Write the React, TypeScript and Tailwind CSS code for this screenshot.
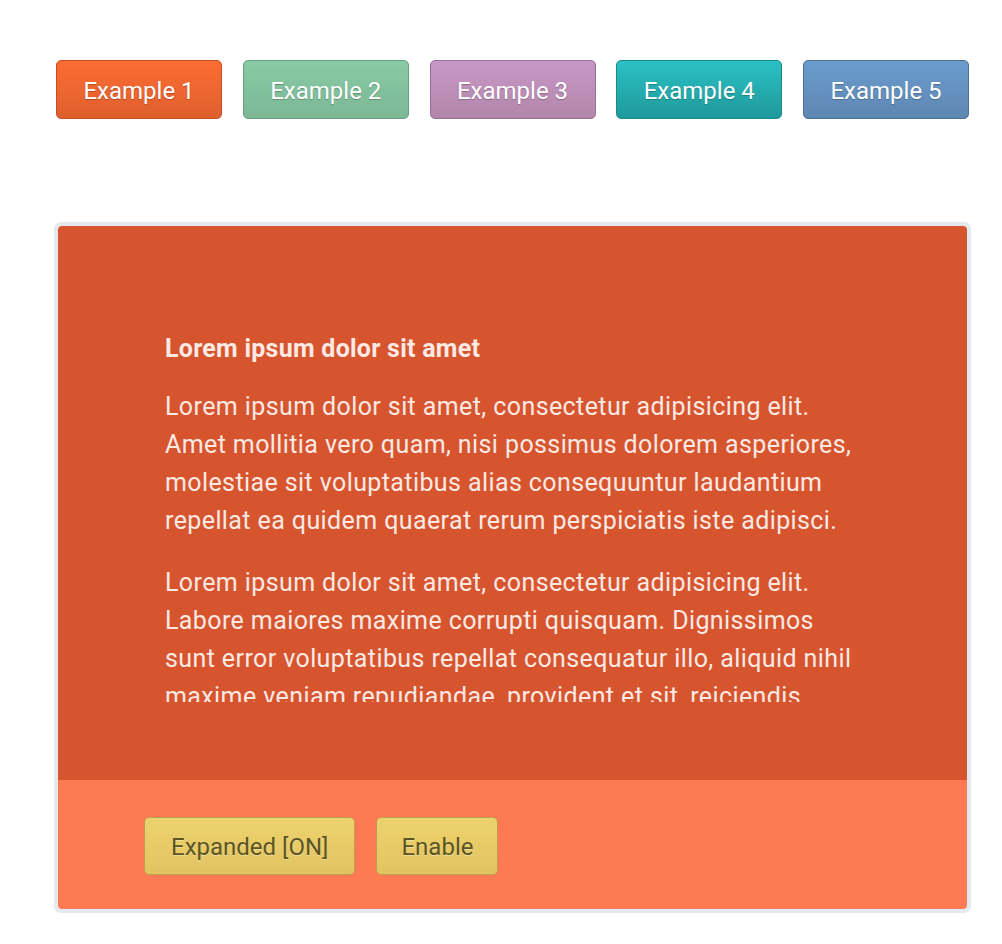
import { useState } from 'react'

const examples = [
  { label: 'Example 1', cls: 'bg-gradient-to-b from-[#fc6d33] to-[#df5f2e] border-[#c24f25]' },
  { label: 'Example 2', cls: 'bg-gradient-to-b from-[#88caa4] to-[#7cb896] border-[#6a9e80]' },
  { label: 'Example 3', cls: 'bg-gradient-to-b from-[#c797c7] to-[#b287aa] border-[#94709a]' },
  { label: 'Example 4', cls: 'bg-gradient-to-b from-[#2bc1c5] to-[#1f999b] border-[#1d8a8c]' },
  { label: 'Example 5', cls: 'bg-gradient-to-b from-[#6b9ccc] to-[#5f87b3] border-[#4c6e92]' },
]

export default function App() {
  const [expanded, setExpanded] = useState(true)

  return (
    <div className="min-h-screen bg-white pt-[60px] pl-[54px]" style={{ fontFamily: 'Roboto, "Liberation Sans", sans-serif' }}>
      <div className="flex w-[916px] justify-between pl-[2px] pr-[1px]">
        {examples.map((ex) => (
          <button
            key={ex.label}
            className={`h-[59px] w-[166px] rounded-[5px] border pt-[2px] text-[24px] text-white [text-shadow:0_1px_1px_rgba(0,0,0,0.25)] ${ex.cls}`}
          >
            {ex.label}
          </button>
        ))}
      </div>

      <div className="mt-[103px] w-[917px] rounded-[7px] border-4 border-[#e3e9ec]">
        <div className="overflow-hidden rounded-[4px]">
          <div className="bg-[#d6552f] pl-[107px] pr-[100px] pt-[104px] pb-[78px]">
            <div className={`${expanded ? 'h-[372px]' : 'h-[120px]'} overflow-hidden text-[#fde9e3]`}>
              <h3 className="text-[25px] font-bold leading-[38px] tracking-[0.25px]">Lorem ipsum dolor sit amet</h3>
              <p className="mt-[20px] text-[25px] leading-[38px] tracking-[0.4px]">
                Lorem ipsum dolor sit amet, consectetur adipisicing elit. Amet mollitia vero quam, nisi possimus dolorem
                asperiores, molestiae sit voluptatibus alias consequuntur laudantium repellat ea quidem quaerat rerum
                perspiciatis iste adipisci.
              </p>
              <p className="mt-[24px] text-[25px] leading-[38px] tracking-[0.4px]">
                Lorem ipsum dolor sit amet, consectetur adipisicing elit. Labore maiores maxime corrupti quisquam.
                Dignissimos sunt error voluptatibus repellat consequatur illo, aliquid nihil maxime veniam repudiandae,
                provident et sit, reiciendis.
              </p>
            </div>
          </div>
          <div className="flex gap-[21px] bg-[#fe7a52] pl-[86px] pt-[37px] pb-[34px]">
            <button
              onClick={() => setExpanded(!expanded)}
              className="h-[58px] rounded-[5px] border border-[#bfa04a] bg-gradient-to-b from-[#edd36d] to-[#e2c362] px-[26px] pt-[2px] text-[24px] text-[#5c5523] [text-shadow:0_1px_0_rgba(255,255,255,0.35)]"
            >
              Expanded [{expanded ? 'ON' : 'OFF'}]
            </button>
            <button className="h-[58px] rounded-[5px] border border-[#bfa04a] bg-gradient-to-b from-[#edd36d] to-[#e2c362] px-[24px] pt-[2px] text-[24px] text-[#5c5523] [text-shadow:0_1px_0_rgba(255,255,255,0.35)]">
              Enable
            </button>
          </div>
        </div>
      </div>
    </div>
  )
}
